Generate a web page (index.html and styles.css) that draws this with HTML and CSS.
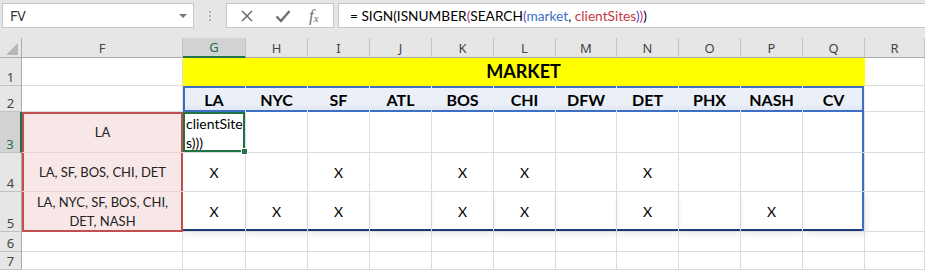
FILE: index.html
```html
<!DOCTYPE html>
<html lang="en">
<head>
    <meta charset="UTF-8">
    <title>Market Sheet</title>
    <link rel="stylesheet" href="styles.css">
</head>
<body>
    <div class="formula-bar">
        <div class="name-box">
            <span>FV</span>
            <span class="arrow"></span>
        </div>
        <div class="grip"><i></i><i></i><i></i></div>
        <div class="fx-buttons">
            <svg class="btn-icon" width="14" height="14" viewBox="0 0 14 14">
                <path d="M2 2 L12 12 M12 2 L2 12" stroke="#707070" stroke-width="1.6" fill="none"/>
            </svg>
            <svg class="btn-icon" width="16" height="14" viewBox="0 0 16 14">
                <path d="M1.5 7.5 L6 12 L14.5 2" stroke="#707070" stroke-width="2.4" fill="none"/>
            </svg>
            <span class="fx">f<sub>x</sub></span>
        </div>
        <div class="formula-input">
            = SIGN(ISNUMBER<span class="p1">(</span>SEARCH<span class="p2">(</span><span class="ref-blue">market</span>, <span class="ref-red">clientSites</span><span class="p2">)</span><span class="p1">)</span>)
        </div>
    </div>

    <div class="sheet">
        <!-- column headers -->
        <div class="hd corner"></div>
        <div class="hd">F</div>
        <div class="hd active-col">G</div>
        <div class="hd">H</div>
        <div class="hd">I</div>
        <div class="hd">J</div>
        <div class="hd">K</div>
        <div class="hd">L</div>
        <div class="hd">M</div>
        <div class="hd">N</div>
        <div class="hd">O</div>
        <div class="hd">P</div>
        <div class="hd">Q</div>
        <div class="hd">R</div>

        <!-- row 1 -->
        <div class="rh">1</div>
        <div class="c"></div>
        <div class="c title">MARKET</div>
        <div class="c"></div>

        <!-- row 2 -->
        <div class="rh">2</div>
        <div class="c"></div>
        <div class="c th th-first">LA</div>
        <div class="c th">NYC</div>
        <div class="c th">SF</div>
        <div class="c th">ATL</div>
        <div class="c th">BOS</div>
        <div class="c th">CHI</div>
        <div class="c th">DFW</div>
        <div class="c th">DET</div>
        <div class="c th">PHX</div>
        <div class="c th">NASH</div>
        <div class="c th th-last">CV</div>
        <div class="c"></div>

        <!-- row 3 -->
        <div class="rh active-row">3</div>
        <div class="c site site-top">LA</div>
        <div class="c editing">clientSite<br>s)))</div>
        <div class="c"></div>
        <div class="c"></div>
        <div class="c"></div>
        <div class="c"></div>
        <div class="c"></div>
        <div class="c"></div>
        <div class="c"></div>
        <div class="c"></div>
        <div class="c"></div>
        <div class="c edge-right"></div>
        <div class="c"></div>

        <!-- row 4 -->
        <div class="rh">4</div>
        <div class="c site">LA, SF, BOS, CHI, DET</div>
        <div class="c mark">X</div>
        <div class="c"></div>
        <div class="c mark">X</div>
        <div class="c"></div>
        <div class="c mark">X</div>
        <div class="c mark">X</div>
        <div class="c"></div>
        <div class="c mark">X</div>
        <div class="c"></div>
        <div class="c"></div>
        <div class="c edge-right"></div>
        <div class="c"></div>

        <!-- row 5 -->
        <div class="rh">5</div>
        <div class="c site site-bottom">LA, NYC, SF, BOS, CHI,<br>DET, NASH</div>
        <div class="c mark edge-bottom">X</div>
        <div class="c mark edge-bottom">X</div>
        <div class="c mark edge-bottom">X</div>
        <div class="c edge-bottom"></div>
        <div class="c mark edge-bottom">X</div>
        <div class="c mark edge-bottom">X</div>
        <div class="c edge-bottom"></div>
        <div class="c mark edge-bottom">X</div>
        <div class="c edge-bottom"></div>
        <div class="c mark edge-bottom">X</div>
        <div class="c edge-bottom edge-right"></div>
        <div class="c"></div>

        <!-- row 6 -->
        <div class="rh">6</div>
        <div class="c"></div><div class="c"></div><div class="c"></div><div class="c"></div>
        <div class="c"></div><div class="c"></div><div class="c"></div><div class="c"></div>
        <div class="c"></div><div class="c"></div><div class="c"></div><div class="c"></div>
        <div class="c"></div>

        <!-- row 7 -->
        <div class="rh">7</div>
        <div class="c"></div><div class="c"></div><div class="c"></div><div class="c"></div>
        <div class="c"></div><div class="c"></div><div class="c"></div><div class="c"></div>
        <div class="c"></div><div class="c"></div><div class="c"></div><div class="c"></div>
        <div class="c"></div>
    </div>
</body>
</html>
```

FILE: styles.css
```css
body {
    margin: 0;
    background: #fff;
    font-family: 'Lato', 'Liberation Sans', sans-serif;
    color: #000;
    overflow: hidden;
}

/* formula bar */

.formula-bar {
    display: flex;
    align-items: flex-start;
    height: 38px;
    padding-top: 3px;
    box-sizing: border-box;
    background: #e6e6e6;
}

.name-box {
    width: 192px;
    height: 25px;
    margin-left: 2px;
    box-sizing: border-box;
    background: #fff;
    border: 1px solid #c6c6c6;
    display: flex;
    align-items: center;
    justify-content: space-between;
    padding: 0 6px 0 7px;
    font-family: 'Noto Sans', sans-serif;
    font-size: 14px;
    color: #333;
}

.arrow {
    width: 0;
    height: 0;
    border-left: 4px solid transparent;
    border-right: 4px solid transparent;
    border-top: 4px solid #777;
}

.grip {
    width: 32px;
    height: 25px;
    display: flex;
    flex-direction: column;
    align-items: center;
    justify-content: center;
    gap: 2px;
}

.grip i {
    width: 2px;
    height: 2px;
    background: #b0b0b0;
}

.fx-buttons {
    width: 108px;
    height: 25px;
    box-sizing: border-box;
    background: #fff;
    border: 1px solid #c6c6c6;
    display: flex;
    align-items: center;
    padding-left: 13px;
    gap: 21px;
}

.fx {
    font-family: 'Liberation Serif', serif;
    font-style: italic;
    font-size: 17px;
    color: #707070;
    margin-left: -3px;
}

.fx sub {
    font-size: 11px;
    vertical-align: -1px;
}

.formula-input {
    flex: 1;
    height: 25px;
    margin-left: 4px;
    box-sizing: border-box;
    background: #fff;
    border: 1px solid #c6c6c6;
    border-right: none;
    padding-left: 11px;
    line-height: 23px;
    font-size: 13.7px;
    white-space: nowrap;
}

.p1 { color: #b13a9c; }
.p2 { color: #5a4fc0; }
.ref-blue { color: #3a6fc7; }
.ref-red { color: #c7383f; }

/* sheet grid */

.sheet {
    display: grid;
    grid-template-columns: 22px 161px 63px repeat(5, 62px) 61px repeat(4, 62px) 1fr;
    grid-template-rows: 20px 28px 26px 41px 39px 40px 20px 18px;
}

.hd {
    background: #e6e6e6;
    border-right: 1px solid #c2c2c2;
    border-bottom: 1px solid #ababab;
    box-sizing: border-box;
    display: flex;
    align-items: center;
    justify-content: center;
    font-family: 'Noto Sans', sans-serif;
    font-size: 13px;
    color: #444;
}

.corner {
    position: relative;
    border-right-color: #ababab;
}

.corner::after {
    content: "";
    position: absolute;
    left: 6px;
    top: 5px;
    width: 12px;
    height: 12px;
    background: #b7b7b7;
    clip-path: polygon(100% 0, 100% 100%, 0 100%);
}

.active-col {
    background: #d2d2d2;
    color: #217346;
    border-bottom: 2px solid #217346;
}

.rh {
    background: #e6e6e6;
    border-right: 1px solid #ababab;
    border-bottom: 1px solid #c2c2c2;
    box-sizing: border-box;
    display: flex;
    align-items: flex-end;
    justify-content: center;
    padding-bottom: 0;
    line-height: 16px;
    font-family: 'Noto Sans', sans-serif;
    font-size: 13px;
    color: #444;
}

.active-row {
    background: #d2d2d2;
    color: #217346;
    border-right: 2px solid #217346;
}

.c {
    border-right: 1px solid #dadce0;
    border-bottom: 1px solid #dadce0;
    box-sizing: border-box;
    display: flex;
    align-items: center;
    justify-content: center;
    text-align: center;
    font-size: 13px;
    line-height: 19px;
}

.title {
    grid-column: span 11;
    background: #ffff00;
    border-color: #ffff00;
    font-weight: bold;
    font-size: 18px;
}

.th {
    background: linear-gradient(#eaeff8 70%, #dfe6f2);
    border-right-color: transparent;
    border-bottom: none;
    font-weight: bold;
    font-size: 16px;
    box-shadow: inset 0 2px 0 #3f6fc4, inset 0 -2px 0 #3f6fc4;
}

.th-first {
    box-shadow: inset 2px 0 0 #3f6fc4, inset 0 2px 0 #3f6fc4, inset 0 -2px 0 #3f6fc4;
}

.th-last {
    box-shadow: inset -2px 0 0 #3f6fc4, inset 0 2px 0 #3f6fc4, inset 0 -2px 0 #3f6fc4;
}

.site {
    background: #f8e7e7;
    border-right: none;
    border-bottom-color: #e9d3d3;
    color: #222;
    box-shadow: inset 2px 0 0 #c0504d, inset -2px 0 0 #c0504d;
}

.site-top {
    box-shadow: inset 2px 0 0 #c0504d, inset -2px 0 0 #c0504d, inset 0 2px 0 #c0504d;
}

.site-bottom {
    border-bottom: none;
    box-shadow: inset 2px 0 0 #c0504d, inset -2px 0 0 #c0504d, inset 0 -2px 0 #c0504d;
}

.mark {
    font-size: 14px;
}

.edge-right {
    box-shadow: inset -2px 0 0 #3f6fc4;
}

.edge-bottom {
    box-shadow: inset 0 -2px 0 #1f3b73, 0 4px 5px rgba(0, 0, 0, 0.06);
}

.edge-bottom.edge-right {
    box-shadow: inset -2px 0 0 #3f6fc4, inset 0 -2px 0 #1f3b73, 3px 4px 5px rgba(0, 0, 0, 0.06);
}

.editing {
    position: relative;
    justify-content: flex-start;
    align-items: flex-start;
    text-align: left;
    padding: 2px 0 0 3px;
    font-size: 14px;
    box-shadow: inset 0 0 0 2px #217346;
}

.editing::after {
    content: "";
    position: absolute;
    right: -3px;
    bottom: -3px;
    width: 5px;
    height: 5px;
    background: #217346;
    border: 1px solid #fff;
}
```
